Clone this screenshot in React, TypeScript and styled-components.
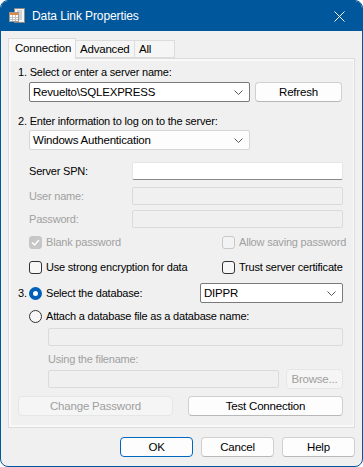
import React from 'react';
import styled, { createGlobalStyle } from 'styled-components';

const GlobalStyle = createGlobalStyle`
  html, body {
    margin: 0;
    padding: 0;
    background: #ffffff;
  }
  body {
    font-family: "Liberation Sans", Arial, sans-serif;
    font-size: 11px;
    letter-spacing: -0.2px;
  }
`;

const Window = styled.div`
  width: 363px;
  height: 467px;
  box-sizing: border-box;
  border: 1px solid #01579b;
  border-radius: 8px;
  background: #f0f0f0;
  overflow: hidden;
  display: flex;
  flex-direction: column;
`;

const TitleBar = styled.div`
  height: 30px;
  background: #01579b;
  display: flex;
  align-items: center;
  padding: 0 0 0 8px;
  color: #ffffff;
`;

const TitleText = styled.span`
  margin-left: 6px;
  font-size: 12px;
  letter-spacing: -0.1px;
  flex: 1;
`;

const CloseBox = styled.div`
  width: 46px;
  height: 30px;
  display: flex;
  align-items: center;
  justify-content: center;
`;

const Body = styled.div`
  flex: 1;
  padding: 6px 7px 0 7px;
  display: flex;
  flex-direction: column;
`;

const TabStrip = styled.div`
  display: flex;
  align-items: flex-end;
  height: 21px;
`;

const Tab = styled.div<{ $active?: boolean; $width: number }>`
  width: ${p => p.$width}px;
  height: ${p => (p.$active ? '21px' : '18px')};
  box-sizing: border-box;
  padding: ${p => (p.$active ? '2px 0 0 6px' : '1px 0 0 4px')};
  background: ${p => (p.$active ? '#f9f9f9' : '#f5f5f5')};
  border: 1px solid #dcdcdc;
  border-bottom: ${p => (p.$active ? 'none' : '1px solid #dcdcdc')};
  border-left-width: ${p => (p.$active ? '1px' : '0')};
  margin-bottom: ${p => (p.$active ? '-1px' : '0')};
  position: relative;
  z-index: ${p => (p.$active ? 1 : 0)};
  color: #000;
  font-size: 11.5px;
  line-height: 15px;
`;

const Panel = styled.div`
  height: 370px;
  box-sizing: border-box;
  border: 1px solid #dcdcdc;
  background: #f9f9f9;
  padding: 2px;
  display: flex;
`;

const PanelInner = styled.div`
  flex: 1;
  background: #f0f0f0;
  padding: 4px 7px 0 7px;
  display: flex;
  flex-direction: column;
`;

const StepLabel = styled.div<{ $top?: number; $left?: number; $disabled?: boolean }>`
  height: 15px;
  line-height: 15px;
  margin-top: ${p => p.$top ?? 0}px;
  margin-left: ${p => p.$left ?? 0}px;
  color: ${p => (p.$disabled ? '#a0a0a0' : '#000')};
`;

const Indent = styled.div<{ $top?: number; $left?: number; $gap?: number }>`
  display: flex;
  align-items: center;
  margin-left: ${p => p.$left ?? 11}px;
  margin-top: ${p => p.$top ?? 0}px;
  gap: ${p => p.$gap ?? 5}px;
`;

const ComboBox = styled.div<{ $width: number; $light?: boolean }>`
  width: ${p => p.$width}px;
  height: 20px;
  box-sizing: border-box;
  border: 1px solid ${p => (p.$light ? '#d6d6d6' : '#7a7a7a')};
  border-radius: 2px;
  background: ${p => (p.$light ? '#fdfdfd' : '#ffffff')};
  display: flex;
  align-items: center;
  padding: 0 6px 0 3px;
  color: #000;
  font-size: 11.5px;
`;

const ComboText = styled.span`
  flex: 1;
`;

const Button = styled.div<{ $width: number; $disabled?: boolean; $default?: boolean }>`
  width: ${p => p.$width}px;
  height: 20px;
  box-sizing: border-box;
  border: 1px solid ${p => (p.$default ? '#0067c0' : p.$disabled ? '#e6e6e6' : '#d0d0d0')};
  border-bottom-color: ${p => (p.$default ? '#0067c0' : p.$disabled ? '#e6e6e6' : '#b8b8b8')};
  border-radius: 4px;
  background: ${p => (p.$disabled ? '#f5f5f5' : '#fdfdfd')};
  color: ${p => (p.$disabled ? '#a0a0a0' : '#000')};
  display: flex;
  align-items: center;
  justify-content: center;
  font-size: 11.5px;
`;

const FieldRow = styled.div<{ $top: number }>`
  display: flex;
  align-items: center;
  margin-left: 11px;
  margin-top: ${p => p.$top}px;
`;

const FieldLabel = styled.span<{ $disabled?: boolean }>`
  width: 103px;
  color: ${p => (p.$disabled ? '#a0a0a0' : '#000')};
`;

const TextInput = styled.div<{ $width: number; $disabled?: boolean }>`
  width: ${p => p.$width}px;
  height: 18px;
  box-sizing: border-box;
  border: 1px solid ${p => (p.$disabled ? '#dadada' : '#e5e5e5')};
  border-bottom-color: ${p => (p.$disabled ? '#dadada' : '#8a8a8a')};
  border-radius: 2px;
  background: ${p => (p.$disabled ? '#f0f0f0' : '#ffffff')};
`;

const OptionRow = styled.div<{ $top: number }>`
  display: flex;
  align-items: center;
  margin-left: 11px;
  margin-top: ${p => p.$top}px;
  height: 16px;
`;

const OptionCell = styled.div<{ $width?: number }>`
  display: flex;
  align-items: center;
  gap: 4px;
  width: ${p => (p.$width ? `${p.$width}px` : 'auto')};
`;

const CheckBox = styled.div<{ $disabled?: boolean; $checked?: boolean }>`
  width: 13px;
  height: 13px;
  box-sizing: border-box;
  border-radius: 3px;
  border: 1px solid ${p => (p.$checked ? '#c6c6c6' : p.$disabled ? '#c8c8c8' : '#333333')};
  background: ${p => (p.$checked ? '#c6c6c6' : p.$disabled ? '#f3f3f3' : '#f7f7f7')};
  display: flex;
  align-items: center;
  justify-content: center;
`;

const Radio = styled.div<{ $checked?: boolean }>`
  width: 13px;
  height: 13px;
  box-sizing: border-box;
  border-radius: 50%;
  border: ${p => (p.$checked ? '4px solid #005fb8' : '1px solid #333333')};
  background: ${p => (p.$checked ? '#ffffff' : '#f7f7f7')};
`;

const OptionText = styled.span<{ $disabled?: boolean }>`
  color: ${p => (p.$disabled ? '#a0a0a0' : '#000')};
  white-space: nowrap;
`;

const DbRow = styled.div`
  display: flex;
  align-items: center;
  margin-top: 8px;
  height: 20px;
`;

const StepNum = styled.span`
  width: 11px;
`;

const ButtonsRow = styled.div<{ $top: number; $gap: number }>`
  display: flex;
  margin-top: ${p => p.$top}px;
  gap: ${p => p.$gap}px;
`;

const Footer = styled.div`
  display: flex;
  justify-content: flex-end;
  gap: 8px;
  margin-top: 9px;
`;

const Chevron = () => (
  <svg width="9" height="5" viewBox="0 0 9 5">
    <path d="M0.5 0.5 L4.5 4.5 L8.5 0.5" stroke="#5a5a5a" strokeWidth="1" fill="none" />
  </svg>
);

const Tick = () => (
  <svg width="9" height="7" viewBox="0 0 9 7">
    <path d="M1 3.5 L3.5 6 L8 1" stroke="#ffffff" strokeWidth="1.3" fill="none" />
  </svg>
);

const AppIcon = () => (
  <svg width="17" height="16" viewBox="0 0 17 16">
    <rect x="5.5" y="0.5" width="10" height="14" fill="#f4f4f4" stroke="#8a8a8a" />
    <path d="M8 3h5M8 5h5M8 7h5M8 9h5M8 11h5" stroke="#b0b0b0" />
    <rect x="0.5" y="4.5" width="9" height="9" fill="#ffffff" stroke="#9a9a9a" />
    <rect x="1" y="5" width="8" height="2" fill="#e8863a" />
    <path d="M1 9.5h8M1 11.5h8M3.5 7v6M6.5 7v6" stroke="#c0c0c0" />
  </svg>
);

const CloseIcon = () => (
  <svg width="11" height="11" viewBox="0 0 11 11">
    <path d="M0.5 0.5 L10.5 10.5 M10.5 0.5 L0.5 10.5" stroke="#ffffff" strokeWidth="1" />
  </svg>
);

const App: React.FC = () => {
  return (
    <>
      <GlobalStyle />
      <Window>
        <TitleBar>
          <AppIcon />
          <TitleText>Data Link Properties</TitleText>
          <CloseBox>
            <CloseIcon />
          </CloseBox>
        </TitleBar>
        <Body>
          <TabStrip>
            <Tab $active $width={68}>Connection</Tab>
            <Tab $width={59}>Advanced</Tab>
            <Tab $width={40}>All</Tab>
          </TabStrip>
          <Panel>
            <PanelInner>
              <StepLabel>1. Select or enter a server name:</StepLabel>
              <Indent $top={2}>
                <ComboBox $width={221}>
                  <ComboText>Revuelto\SQLEXPRESS</ComboText>
                  <Chevron />
                </ComboBox>
                <Button $width={87}>Refresh</Button>
              </Indent>
              <StepLabel $top={12}>2. Enter information to log on to the server:</StepLabel>
              <Indent $top={1}>
                <ComboBox $width={221} $light>
                  <ComboText>Windows Authentication</ComboText>
                  <Chevron />
                </ComboBox>
              </Indent>

              <FieldRow $top={12}>
                <FieldLabel>Server SPN:</FieldLabel>
                <TextInput $width={211} />
              </FieldRow>
              <FieldRow $top={7}>
                <FieldLabel $disabled>User name:</FieldLabel>
                <TextInput $width={211} $disabled />
              </FieldRow>
              <FieldRow $top={5}>
                <FieldLabel $disabled>Password:</FieldLabel>
                <TextInput $width={211} $disabled />
              </FieldRow>

              <OptionRow $top={6}>
                <OptionCell $width={193}>
                  <CheckBox $disabled $checked>
                    <Tick />
                  </CheckBox>
                  <OptionText $disabled>Blank password</OptionText>
                </OptionCell>
                <OptionCell>
                  <CheckBox $disabled />
                  <OptionText $disabled>Allow saving password</OptionText>
                </OptionCell>
              </OptionRow>
              <OptionRow $top={9}>
                <OptionCell $width={193}>
                  <CheckBox />
                  <OptionText>Use strong encryption for data</OptionText>
                </OptionCell>
                <OptionCell>
                  <CheckBox />
                  <OptionText>Trust server certificate</OptionText>
                </OptionCell>
              </OptionRow>

              <DbRow>
                <StepNum>3.</StepNum>
                <OptionCell $width={171}>
                  <Radio $checked />
                  <OptionText>Select the database:</OptionText>
                </OptionCell>
                <ComboBox $width={143}>
                  <ComboText>DIPPR</ComboText>
                  <Chevron />
                </ComboBox>
              </DbRow>
              <OptionRow $top={5}>
                <OptionCell>
                  <Radio />
                  <OptionText>Attach a database file as a database name:</OptionText>
                </OptionCell>
              </OptionRow>
              <Indent $left={30} $top={4}>
                <TextInput $width={295} $disabled />
              </Indent>
              <StepLabel $top={6} $left={30} $disabled>
                Using the filename:
              </StepLabel>
              <Indent $left={30} $top={2} $gap={7}>
                <TextInput $width={231} $disabled />
                <Button $width={57} $disabled>Browse...</Button>
              </Indent>
              <ButtonsRow $top={7} $gap={15}>
                <Button $width={155} $disabled>Change Password</Button>
                <Button $width={155}>Test Connection</Button>
              </ButtonsRow>
            </PanelInner>
          </Panel>
          <Footer>
            <Button $width={73} $default>OK</Button>
            <Button $width={73}>Cancel</Button>
            <Button $width={73}>Help</Button>
          </Footer>
        </Body>
      </Window>
    </>
  );
};

export default App;
